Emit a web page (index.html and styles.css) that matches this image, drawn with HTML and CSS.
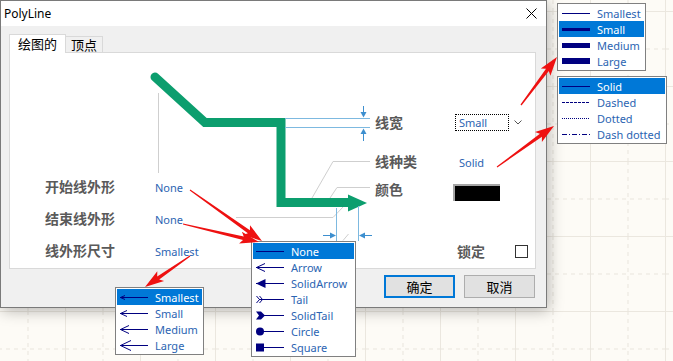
FILE: index.html
```html
<!DOCTYPE html>
<html lang="zh">
<head>
    <meta charset="UTF-8">
    <title>PolyLine</title>
    <link rel="stylesheet" href="styles.css">
</head>
<body>
<div class="desktop">
    <!-- grille du fond -->
    <svg class="grid" width="673" height="361">
        <defs>
            <pattern id="cells" x="65" y="11" width="75" height="75" patternUnits="userSpaceOnUse">
                <line x1="0.5" y1="0" x2="0.5" y2="75" stroke="#ebe7df"/>
                <line x1="0" y1="0.5" x2="75" y2="0.5" stroke="#ebe7df"/>
                <line x1="38" y1="0" x2="38" y2="75" stroke="#e9e5dd" stroke-dasharray="4 4"/>
                <line x1="0" y1="38" x2="75" y2="38" stroke="#e9e5dd" stroke-dasharray="4 4"/>
            </pattern>
        </defs>
        <rect width="673" height="361" fill="url(#cells)"/>
    </svg>

    <div class="dialog">
        <div class="titlebar">
            <span class="title">PolyLine</span>
            <svg class="close" width="11" height="11" viewBox="0 0 11 11">
                <path d="M0.5 0.5 L10.5 10.5 M10.5 0.5 L0.5 10.5" stroke="#000" stroke-width="1"/>
            </svg>
        </div>
        <div class="dialog-body">
            <div class="tabs">
                <div class="tab active">绘图的</div>
                <div class="tab">顶点</div>
            </div>
            <div class="panel">
                <!-- schéma de la polyligne -->
                <svg class="diagram" width="525" height="215" viewBox="10 53 525 215">
                    <g stroke="#cfcfcf" fill="none" stroke-width="1">
                        <line x1="158.5" y1="93" x2="158.5" y2="173"/>
                        <polyline points="370,161.5 333,161.5 312,198"/>
                        <polyline points="370,187.5 337,187.5 330,198"/>
                        <polyline points="236,217.5 333,217.5 343,207"/>
                        <line x1="343" y1="240.5" x2="348.5" y2="234"/>
                    </g>
                    <polyline points="155,77 205,122.5 281,122.5 281,202.5 350,202.5" fill="none" stroke="#0c9e6e" stroke-width="9" stroke-linecap="round"/>
                    <polygon points="348,194.5 367,203 348,211.5" fill="#0c9e6e"/>
                    <g stroke="#7db9e0" stroke-width="1" fill="none">
                        <line x1="285" y1="118.5" x2="370" y2="118.5"/>
                        <line x1="285" y1="127.5" x2="370" y2="127.5"/>
                        <line x1="336.5" y1="208" x2="336.5" y2="241"/>
                        <line x1="358.5" y1="206" x2="358.5" y2="241"/>
                    </g>
                    <g stroke="#3d8fcf" fill="#3d8fcf" stroke-width="1">
                        <line x1="363.5" y1="106" x2="363.5" y2="113"/>
                        <polygon points="360.5,112 366.5,112 363.5,117.5" stroke="none"/>
                        <line x1="363.5" y1="133" x2="363.5" y2="141"/>
                        <polygon points="360.5,134 366.5,134 363.5,128.5" stroke="none"/>
                        <line x1="323" y1="235.5" x2="331" y2="235.5"/>
                        <polygon points="330,232.5 330,238.5 336,235.5" stroke="none"/>
                        <line x1="364" y1="235.5" x2="372" y2="235.5"/>
                        <polygon points="365,232.5 365,238.5 359,235.5" stroke="none"/>
                    </g>
                </svg>

                <div class="shape-fields">
                    <span class="label">开始线外形</span><span class="value">None</span>
                    <span class="label">结束线外形</span><span class="value">None</span>
                    <span class="label">线外形尺寸</span><span class="value">Smallest</span>
                </div>

                <div class="line-fields">
                    <div class="row">
                        <span class="label">线宽</span>
                        <div class="combo"><span class="combo-box">Small</span>
                            <svg class="chevron" width="8" height="5" viewBox="0 0 8 5"><polyline points="0.5,0.5 4,4 7.5,0.5" fill="none" stroke="#555"/></svg>
                        </div>
                    </div>
                    <div class="row row-type">
                        <span class="label">线种类</span><span class="value">Solid</span>
                    </div>
                    <div class="row">
                        <span class="label">颜色</span><span class="swatch"></span>
                    </div>
                    <div class="row-lock">
                        <span class="label">锁定</span><span class="check"></span>
                    </div>
                </div>
            </div>
            <div class="footer">
                <button class="btn primary">确定</button>
                <button class="btn">取消</button>
            </div>
        </div>
    </div>

    <!-- listes déroulantes ouvertes -->
    <div class="popup popup-width">
        <div class="opt"><svg class="sample" width="28" height="16"><rect x="0" y="8" width="28" height="1" fill="#000080"/></svg><span>Smallest</span></div>
        <div class="opt selected"><svg class="sample" width="28" height="16"><rect x="0" y="7" width="28" height="3" fill="#000080"/></svg><span>Small</span></div>
        <div class="opt"><svg class="sample" width="28" height="16"><rect x="0" y="6" width="28" height="5" fill="#000080"/></svg><span>Medium</span></div>
        <div class="opt"><svg class="sample" width="28" height="16"><rect x="0" y="5" width="28" height="6" fill="#000080"/></svg><span>Large</span></div>
    </div>

    <div class="popup popup-style">
        <div class="opt selected"><svg class="sample" width="28" height="16"><line x1="0" y1="8.5" x2="28" y2="8.5" stroke="#000080"/></svg><span>Solid</span></div>
        <div class="opt"><svg class="sample" width="28" height="16"><line x1="0" y1="8.5" x2="28" y2="8.5" stroke="#000080" stroke-dasharray="3 1"/></svg><span>Dashed</span></div>
        <div class="opt"><svg class="sample" width="28" height="16"><line x1="0" y1="8.5" x2="28" y2="8.5" stroke="#000080" stroke-dasharray="1 1"/></svg><span>Dotted</span></div>
        <div class="opt"><svg class="sample" width="28" height="16"><line x1="0" y1="8.5" x2="28" y2="8.5" stroke="#000080" stroke-dasharray="5 2 1 2"/></svg><span>Dash dotted</span></div>
    </div>

    <div class="popup popup-shape">
        <div class="opt selected"><svg class="sample" width="28" height="16"><line x1="0" y1="8.5" x2="28" y2="8.5" stroke="#000080"/></svg><span>None</span></div>
        <div class="opt"><svg class="sample" width="28" height="16" fill="none" stroke="#000080"><line x1="0" y1="8.5" x2="28" y2="8.5"/><polyline points="9,4.5 0.5,8.5 9,12.5"/></svg><span>Arrow</span></div>
        <div class="opt"><svg class="sample" width="28" height="16" fill="#000080" stroke="#000080"><line x1="0" y1="8.5" x2="28" y2="8.5"/><polygon points="0,8.5 9.5,4 9.5,13" stroke="none"/></svg><span>SolidArrow</span></div>
        <div class="opt"><svg class="sample" width="28" height="16" fill="none" stroke="#000080"><line x1="3" y1="8.5" x2="28" y2="8.5"/><polyline points="0.5,5 3.5,8.5 0.5,12"/><polyline points="3.5,5 6.5,8.5 3.5,12"/></svg><span>Tail</span></div>
        <div class="opt"><svg class="sample" width="28" height="16" fill="#000080" stroke="#000080"><line x1="5" y1="8.5" x2="28" y2="8.5"/><polygon points="0,4.5 5,4.5 9,8.5 5,12.5 0,12.5 3,8.5" stroke="none"/></svg><span>SolidTail</span></div>
        <div class="opt"><svg class="sample" width="28" height="16" fill="#000080" stroke="#000080"><line x1="4" y1="8.5" x2="28" y2="8.5"/><circle cx="4" cy="8.5" r="4" stroke="none"/></svg><span>Circle</span></div>
        <div class="opt"><svg class="sample" width="28" height="16" fill="#000080" stroke="#000080"><line x1="4" y1="8.5" x2="28" y2="8.5"/><rect x="0" y="4.5" width="8" height="8" stroke="none"/></svg><span>Square</span></div>
    </div>

    <div class="popup popup-size">
        <div class="opt selected"><svg class="sample" width="28" height="16" fill="none" stroke="#000080"><line x1="0" y1="8.5" x2="28" y2="8.5"/><polyline points="5,6.5 0.5,8.5 5,10.5"/></svg><span>Smallest</span></div>
        <div class="opt"><svg class="sample" width="28" height="16" fill="none" stroke="#000080"><line x1="0" y1="8.5" x2="28" y2="8.5"/><polyline points="7,5.5 0.5,8.5 7,11.5"/></svg><span>Small</span></div>
        <div class="opt"><svg class="sample" width="28" height="16" fill="none" stroke="#000080"><line x1="0" y1="8.5" x2="28" y2="8.5"/><polyline points="9,4.5 0.5,8.5 9,12.5"/></svg><span>Medium</span></div>
        <div class="opt"><svg class="sample" width="28" height="16" fill="none" stroke="#000080"><line x1="0" y1="8.5" x2="28" y2="8.5"/><polyline points="11,3.5 0.5,8.5 11,13.5"/></svg><span>Large</span></div>
    </div>

    <!-- flèches d'annotation -->
    <svg class="callouts" width="673" height="361">
        <g fill="#ee1111">
            <polygon points="521.5,105.4 548.8,70.9 550.4,75.8 557,57 540.8,68.6 546,68.7 520.5,104.6"/>
            <polygon points="497.3,167.5 541.9,136.7 541.9,141.9 554,126 535,132.1 539.9,133.7 496.7,166.5"/>
            <polygon points="189.7,190.5 247.9,233.3 243,235 262,241 250,225.2 249.9,230.3 190.3,189.5"/>
            <polygon points="182.9,224.6 243,240.1 239.1,243.4 259,242 241.9,231.8 243.8,236.5 183.1,223.4"/>
            <polygon points="189.7,255.5 157.2,276.4 157.3,271.3 145,287 164.1,281.1 159.2,279.4 190.3,256.5"/>
        </g>
    </svg>
</div>
</body>
</html>
```

FILE: styles.css
```css
body {
    margin: 0;
    background-color: #fdfbf6;
    font-family: "Noto Sans", "Noto Sans CJK SC", sans-serif;
    overflow: hidden;
}
.desktop {
    position: relative;
    width: 673px;
    height: 361px;
}
.grid {
    position: absolute;
    top: 0;
    left: 0;
}

/* fenêtre */
.dialog {
    position: relative;
    z-index: 1;
    box-sizing: border-box;
    width: 547px;
    height: 308px;
    border: 1px solid #7a7a7a;
    background-color: #f0f0f0;
    box-shadow: 2px 3px 14px rgba(0, 0, 0, 0.28);
}
.titlebar {
    height: 25px;
    background-color: #fff;
    display: flex;
    align-items: center;
    justify-content: space-between;
    padding: 0 9px 0 3px;
}
.title {
    font-size: 12px;
    color: #000;
}
.dialog-body {
    padding: 8px 10px 0 8px;
}
.tabs {
    display: flex;
    align-items: flex-end;
    height: 18px;
}
.tab {
    box-sizing: border-box;
    height: 17px;
    margin-bottom: -1px;
    margin-left: -1px;
    padding: 0 5px;
    border: 1px solid #d9d9d9;
    background-color: #f0f0f0;
    font-family: "Noto Sans CJK SC", sans-serif;
    font-size: 13px;
    line-height: 15px;
    color: #000;
}
.tab.active {
    position: relative;
    z-index: 1;
    height: 19px;
    margin-left: 0;
    padding: 0 8px;
    border-bottom: none;
    background-color: #fff;
    line-height: 17px;
}
.panel {
    position: relative;
    display: flex;
    box-sizing: border-box;
    height: 217px;
    border: 1px solid #d9d9d9;
    background-color: #fff;
}
.diagram {
    position: absolute;
    top: 0;
    left: 0;
}

.label {
    font-family: "Noto Sans CJK SC", sans-serif;
    font-weight: 700;
    font-size: 14px;
    color: #5a5a5a;
}
.value, .combo-box {
    font-family: "Noto Sans", sans-serif;
    font-size: 11px;
    color: #2b64b2;
}

.shape-fields {
    position: relative;
    flex: 0 0 330px;
    padding: 117px 0 0 35px;
    display: grid;
    grid-template-columns: 110px auto;
    grid-auto-rows: 32px;
    align-items: center;
    align-content: start;
}
.shape-fields .value {
    padding-top: 2px;
}

.line-fields {
    position: relative;
    flex: 1;
    padding-top: 55px;
}
.row {
    display: grid;
    grid-template-columns: 80px auto;
    align-items: center;
    height: 28px;
}
.row-type {
    margin-top: 11px;
}
.row-type .value {
    padding: 3px 0 0 4px;
}
.row-lock {
    display: flex;
    align-items: center;
    height: 28px;
    margin-top: 34px;
    padding-left: 82px;
}
.combo {
    display: flex;
    align-items: center;
}
.combo-box {
    box-sizing: border-box;
    width: 54px;
    height: 17px;
    border: 1px dotted #000;
    padding-left: 3px;
    line-height: 15px;
}
.chevron {
    margin-left: 5px;
}
.swatch {
    box-sizing: border-box;
    width: 47px;
    height: 17px;
    margin: 6px 0 0 -2px;
    border-top: 2px solid #a5a5a5;
    border-left: 2px solid #a5a5a5;
    background-color: #000;
}
.check {
    box-sizing: border-box;
    width: 13px;
    height: 13px;
    margin: 1px 0 0 30px;
    border: 1px solid #333;
    background-color: #fff;
}

.footer {
    display: flex;
    justify-content: flex-end;
    gap: 9px;
    margin-top: 6px;
    padding-right: 1px;
}
.btn {
    box-sizing: border-box;
    width: 71px;
    height: 23px;
    border: 1px solid #adadad;
    background-color: #e1e1e1;
    font-family: "Noto Sans CJK SC", sans-serif;
    font-size: 13px;
    color: #000;
    padding: 0;
}
.btn.primary {
    border: 2px solid #0078d7;
}

/* listes */
.popup {
    position: absolute;
    z-index: 2;
    box-sizing: border-box;
    padding: 1px;
    border: 1px solid #808080;
    background-color: #fff;
}
.popup-width {
    left: 557px;
    top: 3px;
    width: 89px;
}
.popup-style {
    left: 557px;
    top: 76px;
    width: 110px;
}
.popup-shape {
    left: 251px;
    top: 241px;
    width: 105px;
}
.popup-size {
    left: 115px;
    top: 287px;
    width: 89px;
}
.opt {
    display: flex;
    align-items: center;
    height: 16px;
    padding-left: 3px;
    font-size: 11px;
    color: #2b64b2;
}
.opt.selected {
    background-color: #0078d7;
    color: #fff;
}
.sample {
    flex: none;
    margin-right: 7px;
}

.callouts {
    position: absolute;
    z-index: 3;
    top: 0;
    left: 0;
    pointer-events: none;
}
```
